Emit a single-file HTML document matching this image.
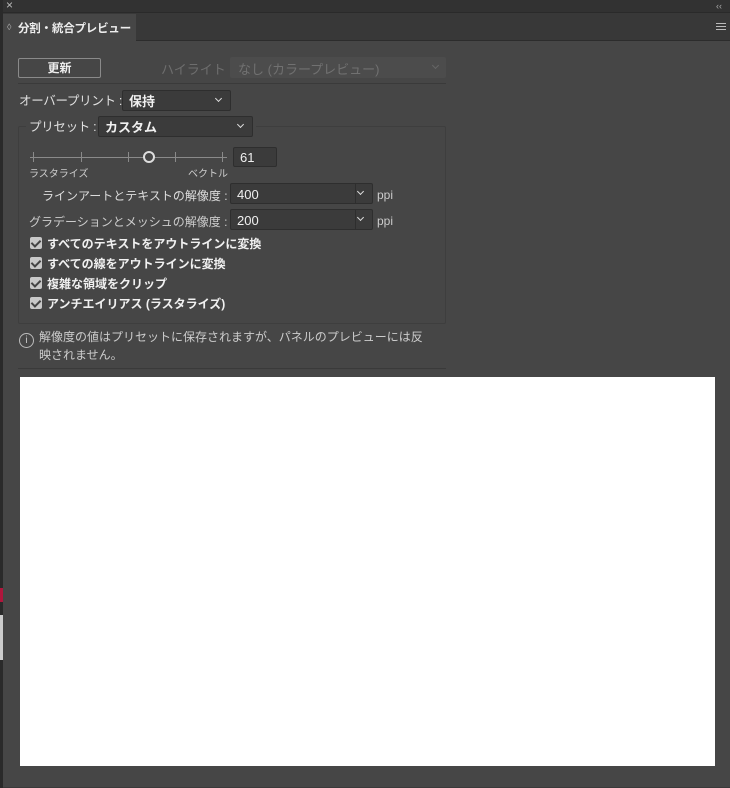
<!DOCTYPE html>
<html><head><meta charset="utf-8"><style>
*{margin:0;padding:0;box-sizing:border-box}
body{width:730px;height:788px;background:#3a3a3a;position:relative;overflow:hidden;font-family:"Liberation Sans","Noto Sans CJK JP",sans-serif;font-size:12px;color:#e6e6e6;line-height:1.25}
.a{position:absolute;white-space:nowrap}
.t{margin-top:3px}
.panel{position:absolute;left:3px;top:0;width:727px;height:787px;background:#464646}
.dd{position:absolute;background:#3b3b3b;border:1px solid #2e2e2e;border-radius:2px;color:#f0f0f0;font-size:13px;padding-left:6px;line-height:21px}
.chev{position:absolute;right:9px;top:5px;width:5px;height:5px;border:solid #ddd;border-width:0 1.5px 1.5px 0;transform:rotate(45deg)}
.cb{position:absolute;width:12px;height:12px;background:#c8c8c8;border-radius:2px}
.cb:after{content:"";position:absolute;left:3px;top:1px;width:4px;height:7px;border:solid #444;border-width:0 2px 2px 0;transform:rotate(45deg)}
.cbl{position:absolute;font-size:12px;font-weight:bold;color:#f0f0f0}
</style></head><body>
<div class="a" style="left:0;top:0;width:3px;height:788px;background:#2a2a2a"></div>
<div class="a" style="left:0;top:588px;width:3px;height:14px;background:#b0163c"></div>
<div class="a" style="left:0;top:615px;width:3px;height:45px;background:#ccc"></div>
<div class="panel"></div>
<div class="a" style="left:3px;top:0;width:727px;height:13px;background:#323232;border-bottom:1px solid #2a2a2a"></div>
<div class="a" style="left:6px;top:-2px;font-size:12px;color:#bbb">×</div>
<div class="a" style="left:716px;top:1px;font-size:9px;color:#aaa">‹‹</div>
<div class="a" style="left:3px;top:13px;width:727px;height:28px;background:#383838;border-bottom:1px solid #2c2c2c"></div>
<div class="a" style="left:3px;top:14px;width:133px;height:28px;background:#464646"></div>
<div class="a" style="left:7px;top:22px;font-size:9px;color:#aaa">◊</div>
<div class="a t" style="left:18px;top:19px;font-size:11.5px;font-weight:bold;color:#eee;letter-spacing:-0.2px">分割・統合プレビュー</div>
<div class="a" style="left:716px;top:23px;width:10px;height:1px;background:#bbb;box-shadow:0 3px 0 #bbb,0 6px 0 #bbb"></div>

<div class="a" style="left:18px;top:58px;width:83px;height:20px;border:1px solid #8a8a8a;border-radius:2px;text-align:center;line-height:18px;font-weight:bold;color:#eee">更新</div>
<div class="a t" style="left:161px;top:59px;font-size:13px;color:#6e6e6e">ハイライト :</div>
<div class="a" style="left:230px;top:57px;width:216px;height:21px;background:#4c4c4c;border-radius:2px"></div>
<div class="a t" style="left:238px;top:59px;font-size:13px;color:#717171">なし (カラープレビュー)</div>
<div class="a" style="left:433px;top:63px;width:5px;height:5px;border:solid #666;border-width:0 1.5px 1.5px 0;transform:rotate(45deg)"></div>
<div class="a" style="left:18px;top:83px;width:428px;height:1px;background:#3a3a3a"></div>

<div class="a t" style="left:19px;top:91px;font-size:12.5px;color:#e0e0e0;letter-spacing:-0.3px">オーバープリント :</div>
<div class="dd" style="left:122px;top:90px;width:109px;height:21px;font-weight:bold">保持<span class="chev"></span></div>

<div class="a" style="left:18px;top:126px;width:428px;height:198px;border:1px solid #3e3e3e;border-radius:2px"></div>
<div class="a" style="left:26px;top:116px;width:230px;height:22px;background:#464646"></div>
<div class="a t" style="left:29px;top:117px;font-size:12.5px;color:#e0e0e0;letter-spacing:-0.3px">プリセット :</div>
<div class="dd" style="left:98px;top:116px;width:155px;height:21px;font-weight:bold">カスタム<span class="chev"></span></div>

<div class="a" style="left:30px;top:157px;width:197px;height:1px;background:#8a8a8a"></div>
<div class="a" style="left:33px;top:152px;width:1px;height:10px;background:#8a8a8a"></div>
<div class="a" style="left:81px;top:152px;width:1px;height:10px;background:#8a8a8a"></div>
<div class="a" style="left:128px;top:152px;width:1px;height:10px;background:#8a8a8a"></div>
<div class="a" style="left:175px;top:152px;width:1px;height:10px;background:#8a8a8a"></div>
<div class="a" style="left:222px;top:152px;width:1px;height:10px;background:#8a8a8a"></div>
<div class="a" style="left:143px;top:151px;width:12px;height:12px;border-radius:50%;border:2px solid #ddd;background:#464646"></div>
<div class="dd" style="left:233px;top:147px;width:44px;height:20px;font-size:13px;line-height:19px">61</div>
<div class="a t" style="left:29px;top:166px;font-size:10px;color:#ccc">ラスタライズ</div>
<div class="a t" style="left:188px;top:166px;font-size:10px;color:#ccc">ベクトル</div>

<div class="a t" style="left:42px;top:186px;font-size:12px;color:#ddd">ラインアートとテキストの解像度 :</div>
<div class="dd" style="left:230px;top:183px;width:143px;height:21px">400<span style="position:absolute;left:124px;top:0;width:1px;height:19px;background:#2e2e2e"></span><span class="chev"></span></div>
<div class="a t" style="left:377px;top:185px;font-size:12px;color:#ccc">ppi</div>
<div class="a t" style="left:29px;top:212px;font-size:12px;color:#ccc">グラデーションとメッシュの解像度 :</div>
<div class="dd" style="left:230px;top:209px;width:143px;height:21px">200<span style="position:absolute;left:124px;top:0;width:1px;height:19px;background:#2e2e2e"></span><span class="chev"></span></div>
<div class="a t" style="left:377px;top:211px;font-size:12px;color:#ccc">ppi</div>

<div class="cb" style="left:30px;top:237px"></div><div class="cbl a t" style="left:47px;top:234px">すべてのテキストをアウトラインに変換</div>
<div class="cb" style="left:30px;top:257px"></div><div class="cbl a t" style="left:47px;top:254px">すべての線をアウトラインに変換</div>
<div class="cb" style="left:30px;top:277px"></div><div class="cbl a t" style="left:47px;top:274px">複雑な領域をクリップ</div>
<div class="cb" style="left:30px;top:297px"></div><div class="cbl a t" style="left:47px;top:294px">アンチエイリアス (ラスタライズ)</div>

<div class="a" style="left:19px;top:333px;width:15px;height:15px;border:1px solid #bbb;border-radius:50%;font-size:10px;text-align:center;line-height:13px;color:#ccc">i</div>
<div class="a" style="left:39px;top:328px;font-size:12px;color:#ccc;line-height:18px">解像度の値はプリセットに保存されますが、パネルのプレビューには反<br>映されません。</div>
<div class="a" style="left:18px;top:368px;width:428px;height:1px;background:#3a3a3a"></div>
<div class="a" style="left:20px;top:377px;width:695px;height:389px;background:#fff"></div>
</body></html>
